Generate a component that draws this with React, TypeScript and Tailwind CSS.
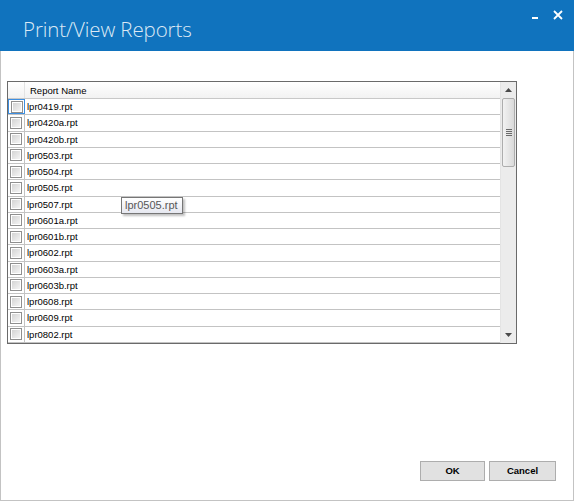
import React from "react";

const files = [
  "lpr0419.rpt",
  "lpr0420a.rpt",
  "lpr0420b.rpt",
  "lpr0503.rpt",
  "lpr0504.rpt",
  "lpr0505.rpt",
  "lpr0507.rpt",
  "lpr0601a.rpt",
  "lpr0601b.rpt",
  "lpr0602.rpt",
  "lpr0603a.rpt",
  "lpr0603b.rpt",
  "lpr0608.rpt",
  "lpr0609.rpt",
  "lpr0802.rpt",
];

function CheckBox() {
  return (
    <div className="w-[12px] h-[12px] border border-[#8f8f8f] bg-white p-[1px]">
      <div className="w-full h-full bg-gradient-to-br from-[#d4d4d4] to-[#f4f4f4]" />
    </div>
  );
}

export default function App() {
  return (
    <div className="w-[574px] h-[501px] flex flex-col bg-white font-['Liberation_Sans',Arial,sans-serif] relative overflow-hidden">
      {/* Title bar */}
      <div className="h-[51px] bg-[#1073be] flex items-start justify-between shrink-0">
        <div className="pl-[23px] pt-[16px] text-[20.5px] leading-[26px] font-light text-[#dce9f5] font-['Open_Sans',sans-serif] tracking-[-0.1px]">
          Print/View Reports
        </div>
        <div className="flex items-start pr-[11px] pt-[9px] gap-[14px] text-white">
          <svg width="8" height="12" viewBox="0 0 8 12" className="mt-[1px]">
            <rect x="1" y="7" width="6" height="2" fill="#ffffff" />
          </svg>
          <svg width="10" height="10" viewBox="0 0 10 10" className="mt-[1px]">
            <path d="M1 1 L9 9 M9 1 L1 9" stroke="#ffffff" strokeWidth="1.8" />
          </svg>
        </div>
      </div>

      {/* Body */}
      <div className="flex-1 flex flex-col border-x border-b border-[#c3c3c3] pl-[6px] pt-[30px]">
        <div className="w-[510px] h-[263px] border border-[#6a6a6a] flex bg-white">
          {/* Grid content */}
          <div className="flex-1 flex flex-col overflow-hidden">
            <div className="h-[17px] shrink-0 flex border-b border-[#c8c8c8] bg-gradient-to-b from-[#ffffff] to-[#f2f2f2]">
              <div className="w-[17px] border-r border-[#e3e3e3]" />
              <div className="pl-[5px] text-[9.5px] leading-[17px] text-black">Report Name</div>
            </div>
            {files.map((f, i) => (
              <div key={f} className="h-[16.25px] shrink-0 flex border-b border-[#c3c3c3]">
                <div
                  className={
                    i === 0
                      ? "w-[17px] shrink-0 flex items-center justify-center border border-[#3d8ee0]"
                      : "w-[17px] shrink-0 flex items-center justify-center border-r border-[#c3c3c3]"
                  }
                >
                  <CheckBox />
                </div>
                <div className="pl-[2px] text-[9.5px] leading-[16px] text-black">{f}</div>
              </div>
            ))}
          </div>
          {/* Scrollbar */}
          <div className="w-[16px] shrink-0 flex flex-col bg-[#ececec] border-l border-[#e4e4e4]">
            <div className="h-[16px] flex items-center justify-center">
              <svg width="7" height="4" viewBox="0 0 7 4">
                <path d="M3.5 0 L7 4 L0 4 Z" fill="#4a4a4a" />
              </svg>
            </div>
            <div className="mx-[1px] h-[69px] rounded-[2px] border border-[#adadad] bg-gradient-to-r from-[#f2f2f2] to-[#dadada] flex flex-col items-center justify-center gap-[1px]">
              <div className="w-[6px] h-[1px] bg-[#6a6a6a]" />
              <div className="w-[6px] h-[1px] bg-[#6a6a6a]" />
              <div className="w-[6px] h-[1px] bg-[#6a6a6a]" />
              <div className="w-[6px] h-[1px] bg-[#6a6a6a]" />
            </div>
            <div className="flex-1" />
            <div className="h-[16px] flex items-center justify-center">
              <svg width="7" height="4" viewBox="0 0 7 4">
                <path d="M0 0 L7 0 L3.5 4 Z" fill="#4a4a4a" />
              </svg>
            </div>
          </div>
        </div>

        <div className="flex-1" />

        <div className="flex justify-end gap-[4px] pr-[17px] pb-[19px]">
          <button className="w-[65px] h-[20px] bg-[#e1e1e1] border border-[#adadad] text-[9.5px] font-bold text-black leading-[18px]">
            OK
          </button>
          <button className="w-[67px] h-[20px] bg-[#e1e1e1] border border-[#adadad] text-[9.5px] font-bold text-black leading-[18px]">
            Cancel
          </button>
        </div>
      </div>

      {/* Tooltip */}
      <div className="absolute left-[121px] top-[197px] h-[17px] pl-[3px] pr-[4px] border border-[#767676] bg-gradient-to-b from-[#ffffff] to-[#e6e8f0] text-[11px] leading-[15px] text-[#575757] shadow-[2px_2px_2px_rgba(0,0,0,0.25)]">
        lpr0505.rpt
      </div>
    </div>
  );
}
